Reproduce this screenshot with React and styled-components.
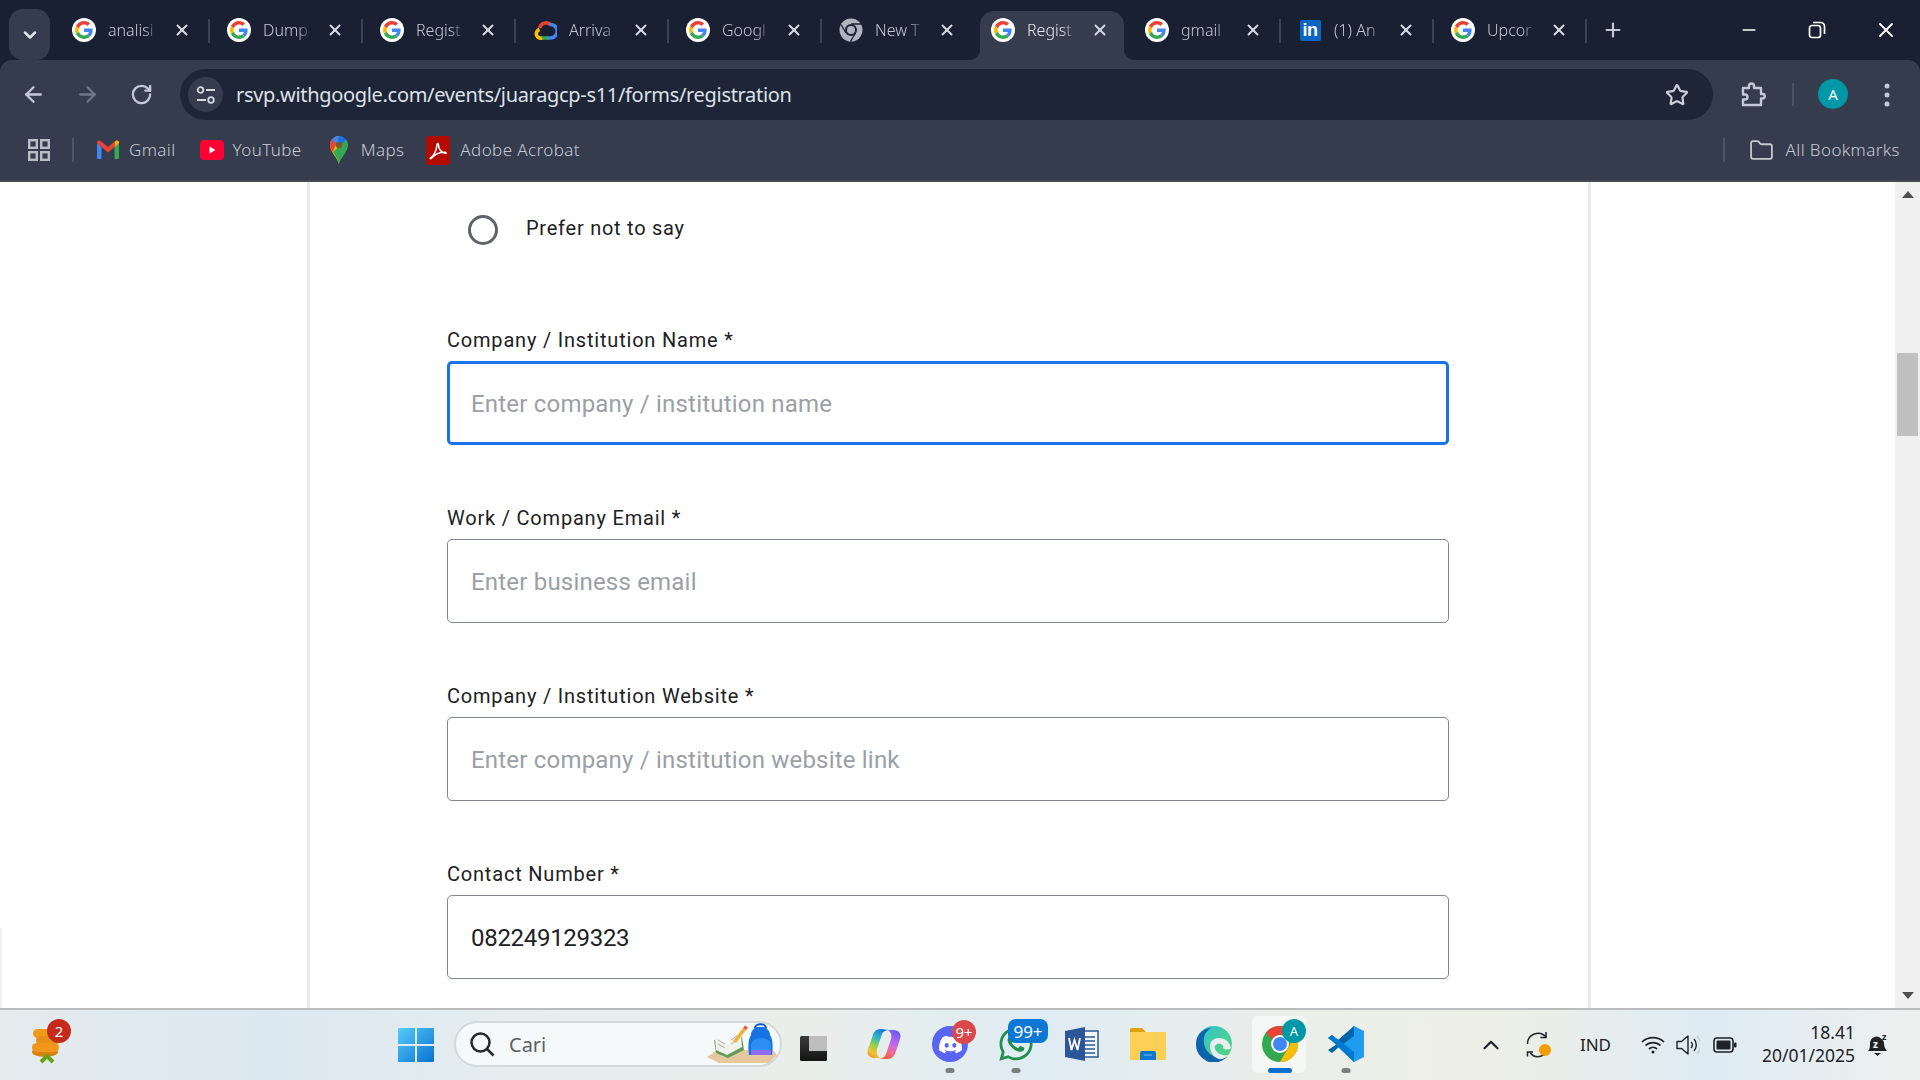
import React from "react";
import styled, { createGlobalStyle } from "styled-components";
import { ArrowLeft, ArrowRight, RotateCw, Star, Folder, X, Plus, ChevronDown, ChevronUp, Minus } from "lucide-react";
import { FaDiscord, FaWhatsapp } from "react-icons/fa";

const Global = createGlobalStyle`
  html, body { margin: 0; padding: 0; height: 100%; overflow: hidden; background: #fff; }
  * { box-sizing: border-box; }
`;

const uiFont = `"Noto Sans", "Open Sans", sans-serif`;
const formFont = `Roboto, "Liberation Sans", sans-serif`;

const Screen = styled.div`
  width: 1920px;
  height: 1080px;
  display: flex;
  flex-direction: column;
  overflow: hidden;
  font-family: ${uiFont};
`;

const TabStrip = styled.div`
  height: 60px;
  flex: none;
  display: flex;
  align-items: flex-end;
  background: #182032;
  padding-left: 9px;
`;

const TabSearch = styled.div`
  width: 41px;
  height: 51px;
  margin: 0 7px 0 0;
  align-self: flex-start;
  margin-top: 9px;
  border-radius: 14px;
  background: #343c4d;
  color: #dfe3ea;
  display: flex;
  align-items: center;
  justify-content: center;
`;

const Tab = styled.div`
  position: relative;
  width: 153px;
  height: 49px;
  flex: none;
  padding: 0 19px 11px 17px;
  display: flex;
  align-items: center;
  color: ${(p) => (p.$active ? "#e3e6ec" : "#c3c8d2")};
  &:nth-child(2) { padding-left: 15px; }
  ${(p) =>
    p.$active &&
    `
    background: #343c4d;
    width: 144px;
    margin: 0 4px 0 5px;
    padding: 0 15px 11px 11px;
    border-radius: 14px 14px 0 0;
    &::before, &::after {
      content: "";
      position: absolute;
      bottom: 0;
      width: 12px;
      height: 12px;
    }
    &::before { left: -12px; background: radial-gradient(circle at 0 0, #182032 12px, #343c4d 12.5px); }
    &::after { right: -12px; background: radial-gradient(circle at 100% 0, #182032 12px, #343c4d 12.5px); }
  `}
`;

const TabSep = styled.span`
  position: absolute;
  right: 0;
  top: 8px;
  width: 2px;
  height: 24px;
  background: #3a4254;
`;

const Favicon = styled.span`
  width: 24px;
  height: 24px;
  flex: none;
  display: flex;
  align-items: center;
  justify-content: center;
`;

const TabTitle = styled.span`
  flex: 1;
  min-width: 0;
  margin-left: 12px;
  font-size: 16px;
  font-weight: 300;
  white-space: nowrap;
  overflow: hidden;
  -webkit-mask-image: linear-gradient(90deg, #000 70%, transparent 100%);
  mask-image: linear-gradient(90deg, #000 70%, transparent 100%);
`;

const TabClose = styled.span`
  margin-left: 14px;
  flex: none;
  display: flex;
  color: #d5d9e1;
`;

const NewTab = styled.div`
  margin: 0 0 19px 15px;
  color: #c3c8d4;
  display: flex;
`;

const WindowControls = styled.div`
  margin-left: auto;
  align-self: stretch;
  display: flex;
`;

const WindowButton = styled.div`
  width: 68.5px;
  display: flex;
  align-items: center;
  justify-content: center;
  color: #fff;
`;

const Chrome = styled.div`
  height: 122px;
  flex: none;
  background: #182032;
`;

const ChromeInner = styled.div`
  height: 122px;
  background: #343c4d;
  border-radius: 12px 12px 0 0;
  border-bottom: 2px solid #45494f;
  display: flex;
  flex-direction: column;
`;

const Toolbar = styled.div`
  height: 60px;
  padding: 9px 0 0 6px;
  display: flex;
`;

const NavButton = styled.div`
  width: ${(p) => p.$w || 54}px;
  height: 51px;
  flex: none;
  display: flex;
  align-items: center;
  justify-content: center;
  color: ${(p) => (p.$dim ? "#6f7686" : "#c3c9d6")};
`;

const DotsSlot = styled(NavButton)`
  padding-left: 6px;
`;

const Omnibox = styled.div`
  width: 1533px;
  height: 51px;
  flex: none;
  margin-left: 12px;
  border-radius: 26px;
  background: #1d2537;
  display: flex;
  align-items: center;
  padding: 0 0 0 8px;
`;

const SiteChip = styled.div`
  width: 35px;
  height: 35px;
  border-radius: 50%;
  background: #343c4d;
  color: #d5d9e2;
  flex: none;
  display: flex;
  align-items: center;
  justify-content: center;
`;

const Url = styled.div`
  margin-left: 13px;
  flex: 1;
  color: #dde1e8;
  font-size: 20px;
  letter-spacing: -0.32px;
`;

const StarSlot = styled.div`
  margin-right: 24px;
  display: flex;
  color: #c9ced9;
`;

const ToolSep = styled.span`
  width: 2px;
  height: 23px;
  margin: 14px 0 0 -1px;
  background: #4a5264;
  flex: none;
`;

const Avatar = styled.div`
  width: 30px;
  height: 30px;
  margin: 10px 0 0 24px;
  border-radius: 50%;
  background: #0097a7;
  color: #fff;
  font-size: 15px;
  flex: none;
  display: flex;
  align-items: center;
  justify-content: center;
`;

const Bookmarks = styled.div`
  height: 60px;
  display: flex;
  align-items: center;
  padding: 0 20px 0 28px;
  color: #c6cad3;
`;

const BarSep = styled.span`
  width: 2px;
  height: 24px;
  background: #4d5465;
  flex: none;
  margin: ${(p) => p.$margin};
`;

const Bookmark = styled.div`
  display: flex;
  align-items: center;
  gap: ${(p) => p.$gap || 9}px;
  margin-right: ${(p) => p.$right || 0}px;
  font-size: 17px;
  letter-spacing: 0.4px;
  font-weight: 300;
  white-space: nowrap;
`;

const BookmarkText = styled.span`
  margin-top: -2px;
`;

const Page = styled.div`
  height: 826px;
  flex: none;
  display: flex;
  background: linear-gradient(90deg, #ececec, #fff) no-repeat left bottom / 3px 80px, #fff;
`;

const PageMain = styled.div`
  width: 1895px;
  flex: none;
  padding-left: 307px;
`;

const FormColumn = styled.div`
  width: 1284px;
  height: 100%;
  padding-left: 137px;
  border-left: 3px solid #e8e9ed;
  border-right: 3px solid #e8e9ed;
  font-family: ${formFont};
  overflow: hidden;
`;

const RadioRow = styled.div`
  display: flex;
  align-items: flex-start;
  padding: 33px 0 0 21px;
  height: 146px;
`;

const RadioCircle = styled.span`
  width: 30px;
  height: 30px;
  border: 3px solid #5f6368;
  border-radius: 50%;
  flex: none;
`;

const RadioLabel = styled.span`
  margin: -1px 0 0 28px;
  font-size: 20px;
  line-height: 28px;
  letter-spacing: 0.75px;
  color: #202124;
`;

const Field = styled.div`
  width: 1002px;
  height: 178px;
`;

const Label = styled.div`
  font-size: 20px;
  line-height: 25px;
  height: 33px;
  letter-spacing: 0.8px;
  white-space: nowrap;
  color: #202124;
`;

const Input = styled.div`
  height: 84px;
  border: ${(p) => (p.$focus ? "3px solid #1a73e8" : "1px solid #80868b")};
  border-radius: 5px;
  padding: 2px 0 0 ${(p) => (p.$focus ? 21 : 23)}px;
  display: flex;
  align-items: center;
  font-size: 24px;
  letter-spacing: ${(p) => (p.$value ? "-0.3px" : "0.2px")};
  color: ${(p) => (p.$value ? "#202124" : "#9aa0a6")};
`;

const Scrollbar = styled.div`
  width: 25px;
  flex: none;
  background: #f0f0f0;
  display: flex;
  flex-direction: column;
  align-items: center;
`;

const ScrollArrow = styled.div`
  height: 25px;
  flex: none;
  display: flex;
  align-items: center;
  justify-content: center;
`;

const ScrollThumb = styled.div`
  width: 21px;
  height: 83px;
  margin: 146px 0 547px;
  flex: none;
  background: #c0c0c0;
`;

const Taskbar = styled.div`
  height: 72px;
  flex: none;
  border-top: 2px solid #b9bdbd;
  background: linear-gradient(90deg, #e4ebed 0%, #dce8f1 14%, #e7eeee 30%, #e9eeea 42%, #dfecf3 54%, #ebeee9 68%, #edefe6 78%, #deebf4 89%, #eef0ee 100%);
  display: flex;
  align-items: flex-start;
  position: relative;
`;

const WidgetSlot = styled.div`
  position: relative;
  width: 378px;
  padding: 16px 0 0 32px;
  flex: none;
  height: 100%;
`;

const Badge = styled.span`
  position: absolute;
  top: ${(p) => p.$top}px;
  left: ${(p) => p.$left}px;
  min-width: ${(p) => p.$w}px;
  height: ${(p) => p.$h}px;
  padding: 0 3px;
  border-radius: ${(p) => p.$r}px;
  background: ${(p) => p.$bg};
  color: #fff;
  font-size: ${(p) => p.$size}px;
  display: flex;
  align-items: center;
  justify-content: center;
  white-space: nowrap;
`;

const StartSlot = styled.div`
  width: 76px;
  height: 100%;
  flex: none;
  display: flex;
  align-items: center;
  justify-content: center;
`;

const SearchPill = styled.div`
  position: relative;
  width: 328px;
  height: 46px;
  margin-top: 11px;
  flex: none;
  border-radius: 24px;
  border: 2px solid #d3d9db;
  background: #f6f9fa;
  display: flex;
  align-items: center;
  padding-left: 13px;
  color: #5b5f62;
  font-size: 20px;
`;

const SearchText = styled.span`
  margin-left: 14px;
`;

const SearchArt = styled.span`
  position: absolute;
  right: 3px;
  top: -2px;
  display: flex;
`;

const AppRow = styled.div`
  display: flex;
  height: 100%;
  margin-left: 3px;
`;

const AppSlot = styled.div`
  position: relative;
  width: 66px;
  height: 100%;
  flex: none;
  display: flex;
  align-items: flex-start;
  justify-content: center;
  padding-top: 16px;
  ${(p) =>
    p.$active &&
    `
    &::before {
      content: "";
      position: absolute;
      top: 6px;
      left: 5px;
      width: 51px;
      height: 57px;
      border-radius: 5px;
      background: rgba(255, 255, 255, 0.55);
      box-shadow: 3px 0 0 rgba(255, 255, 255, 0.5);
    }
  `}
`;

const AppIcon = styled.span`
  position: relative;
  width: 36px;
  height: 36px;
  display: flex;
  align-items: center;
  justify-content: center;
`;

const RunDot = styled.span`
  position: absolute;
  bottom: 7px;
  left: 50%;
  transform: translateX(-50%);
  width: ${(p) => (p.$active ? 24 : 9)}px;
  height: 5px;
  border-radius: 3px;
  background: ${(p) => (p.$active ? "#0a6fc9" : "#7c7f80")};
`;

const Tray = styled.div`
  margin-left: auto;
  height: 100%;
  display: flex;
  align-items: center;
  color: #1f2226;
  padding-right: 31px;
`;

const TrayItem = styled.span`
  display: flex;
  align-items: center;
  justify-content: center;
  margin: ${(p) => p.$margin || 0};
  font-size: ${(p) => p.$size || 17}px;
`;

const Clock = styled.div`
  width: 94px;
  margin: 0 0 3px 24px;
  text-align: right;
  font-size: 17.5px;
  line-height: 23px;
  white-space: nowrap;
`;

function GoogleG({ size = 18 }) {
  return (
    <svg width={size} height={size} viewBox="0 0 48 48">
      <path fill="#EA4335" d="M24 9.5c3.54 0 6.71 1.22 9.21 3.6l6.85-6.85C35.9 2.38 30.47 0 24 0 14.62 0 6.51 5.38 2.56 13.22l7.98 6.19C12.43 13.72 17.74 9.5 24 9.5z" />
      <path fill="#4285F4" d="M46.98 24.55c0-1.57-.15-3.09-.38-4.55H24v9.02h12.94c-.58 2.96-2.26 5.48-4.78 7.18l7.73 6c4.51-4.18 7.09-10.36 7.09-17.65z" />
      <path fill="#FBBC05" d="M10.53 28.59c-.48-1.45-.76-2.99-.76-4.59s.27-3.14.76-4.59l-7.98-6.19C.92 16.46 0 20.12 0 24c0 3.88.92 7.54 2.56 10.78l7.97-6.19z" />
      <path fill="#34A853" d="M24 48c6.48 0 11.93-2.13 15.89-5.81l-7.73-6c-2.15 1.45-4.92 2.3-8.16 2.3-6.26 0-11.57-4.22-13.47-9.91l-7.98 6.19C6.51 42.62 14.62 48 24 48z" />
    </svg>
  );
}

const GoogleCircle = styled.span`
  width: 24px;
  height: 24px;
  border-radius: 50%;
  background: #fff;
  display: flex;
  align-items: center;
  justify-content: center;
`;

function GoogleFavicon() {
  return (
    <GoogleCircle>
      <GoogleG />
    </GoogleCircle>
  );
}

function CloudIcon() {
  return (
    <svg width="24" height="20" viewBox="0 0 24 20" fill="none" strokeWidth="3.6">
      <path d="M6.500 8A6.800 6.800 0 0 1 18 5" stroke="#ea4335" />
      <path d="M17 4.500a6.700 6.700 0 0 1 1 13.500h-4" stroke="#4285f4" />
      <path d="M15 18H8" stroke="#34a853" />
      <path d="M9 18a4.300 4.300 0 0 1-2.500-8.500" stroke="#fbbc05" />
    </svg>
  );
}

function ChromeGray() {
  return (
    <svg width="24" height="24" viewBox="0 0 24 24">
      <circle cx="12" cy="12" r="11.5" fill="#aeb4c0" />
      <circle cx="12" cy="12" r="6" fill="#182032" />
      <circle cx="12" cy="12" r="4" fill="#aeb4c0" />
      <path d="M12 6h10M7 15L2 6.500M16.500 15l-5 8.500" stroke="#182032" strokeWidth="1.300" />
    </svg>
  );
}

const LinkedInBox = styled.span`
  width: 21px;
  height: 21px;
  border-radius: 2px;
  background: #0a66c2;
  color: #fff;
  font-family: "Liberation Sans", sans-serif;
  font-weight: 700;
  font-size: 18px;
  letter-spacing: -0.5px;
  display: flex;
  align-items: center;
  justify-content: center;
`;

function GmailIcon() {
  return (
    <svg width="22" height="20" viewBox="0 0 22 20">
      <path d="M0 3v15a1 1 0 0 0 1 1h3.500V7z" fill="#4285f4" />
      <path d="M22 3v15a1 1 0 0 1-1 1h-3.500V7z" fill="#34a853" />
      <path d="M0 3c0-2.400 2.400-3 4-1.800L11 7l7-5.800C19.600 0 22 .6 22 3l-4.500 4L11 12.500 4.500 7z" fill="#ea4335" />
      <path d="M22 3c0-2.400-2.400-3-4-1.800V7z" fill="#fbbc05" />
    </svg>
  );
}

function YouTubeIcon() {
  return (
    <svg width="24" height="20" viewBox="0 0 24 20">
      <rect width="24" height="20" rx="4" fill="#ff0033" />
      <path d="M9.500 6.500v7l6-3.500z" fill="#fff" />
    </svg>
  );
}

function MapsIcon() {
  return (
    <svg width="18" height="28" viewBox="0 0 18 28">
      <path d="M9 28C7 21 0 16 0 9a9 9 0 0 1 9-9z" fill="#fbbc04" />
      <path d="M9 28c2-7 9-12 9-19 0-2-.7-4-2-5.500L3 16c2 3.500 5 7 6 12z" fill="#34a853" />
      <path d="M2 3.500A9 9 0 0 1 9 0v6L5 10z" fill="#4285f4" />
      <path d="M9 0a9 9 0 0 1 7 3.500L12 8 8 5z" fill="#1a73e8" />
      <path d="M0 9c0-2 .7-4 2-5.500L6 8l-3 8C1.500 14 0 11.500 0 9z" fill="#ea4335" />
      <circle cx="9" cy="9" r="3.200" fill="#7a5a20" />
    </svg>
  );
}

function AcrobatIcon() {
  return (
    <svg width="24" height="29" viewBox="0 0 24 29">
      <rect width="24" height="29" rx="3" fill="#b30b00" />
      <path d="M4.500 22c3-1.500 6-7 6.500-13 .2-2 1.500-2 1.500 0 0 4 3 8 7 8.500 1 .2 1-1.200-1-1.200-4 0-9 1.500-12.500 5.500-1 1.200-2.500 1-1.500.2z" fill="none" stroke="#fff" strokeWidth="1.500" />
    </svg>
  );
}

function AppsGrid() {
  return (
    <svg width="22" height="22" viewBox="0 0 22 22" fill="none" stroke="#b9bdc6" strokeWidth="2.400">
      <rect x="1.200" y="1.200" width="7.600" height="7.600" />
      <rect x="13.200" y="1.200" width="7.600" height="7.600" />
      <rect x="1.200" y="13.200" width="7.600" height="7.600" />
      <rect x="13.200" y="13.200" width="7.600" height="7.600" />
    </svg>
  );
}

function TuneIcon() {
  return (
    <svg width="20" height="20" viewBox="0 0 20 20" fill="none" stroke="currentColor" strokeWidth="1.800">
      <circle cx="4.500" cy="5" r="2.800" />
      <path d="M10 5h9M1 15h9" />
      <circle cx="15" cy="15" r="2.800" />
    </svg>
  );
}

function PuzzleIcon() {
  return (
    <svg width="26" height="26" viewBox="0 0 26 26" fill="none" stroke="#c3c9d6" strokeWidth="2.400" strokeLinejoin="round">
      <path d="M3 6h6V4a2.500 2.500 0 0 1 5 0v2h7v6h1.500a2 2 0 0 1 0 4.500H21V23H3v-5.500h2a2.500 2.500 0 0 0 0-5H3z" />
    </svg>
  );
}

function RestoreIcon() {
  return (
    <svg width="18" height="18" viewBox="0 0 18 18" fill="none" stroke="#fff" strokeWidth="1.700">
      <rect x="1.500" y="4.500" width="11" height="12" rx="2.500" />
      <path d="M5 1.500h7.500a4 4 0 0 1 4 4V13" />
    </svg>
  );
}

function DotsIcon() {
  return (
    <svg width="6" height="26" viewBox="0 0 6 26" fill="#c3c9d6">
      <circle cx="3" cy="4" r="2.500" />
      <circle cx="3" cy="13" r="2.500" />
      <circle cx="3" cy="22" r="2.500" />
    </svg>
  );
}

function CoinsIcon() {
  return (
    <svg width="36" height="48" viewBox="0 0 36 48">
      <ellipse cx="13" cy="26" rx="13" ry="5" fill="#d9800e" />
      <rect x="1" y="3" width="24" height="9" rx="4.500" fill="#f09a1a" />
      <rect x="4" y="10" width="24" height="8" rx="4" fill="#e8901a" />
      <rect x="0" y="17" width="27" height="9" rx="4.500" fill="#f0961c" />
      <path d="M9 36l6-6 6 6" fill="none" stroke="#6aa114" strokeWidth="4" />
    </svg>
  );
}

function StartIcon() {
  return (
    <svg width="36" height="36" viewBox="0 0 36 36">
      <defs>
        <linearGradient id="win" x1="0" y1="0" x2="1" y2="1">
          <stop offset="0" stopColor="#55cdfa" />
          <stop offset="1" stopColor="#0a70d0" />
        </linearGradient>
      </defs>
      <path d="M1 1h16v16H0V2a1 1 0 0 1 1-1zM19 1h16a1 1 0 0 1 1 1v15H19zM0 19h17v16H1a1 1 0 0 1-1-1zM19 19h17v15a1 1 0 0 1-1 1H19z" fill="url(#win)" />
    </svg>
  );
}

function SearchIcon() {
  return (
    <svg width="26" height="26" viewBox="0 0 26 26" fill="none" stroke="#26292c" strokeWidth="2.500">
      <circle cx="11.500" cy="11.500" r="9" />
      <path d="M18 18l6.500 6.500" />
    </svg>
  );
}

function SearchArtwork() {
  return (
    <svg width="70" height="46" viewBox="0 0 70 46">
      <path d="M10 29h56l4 5-8 8H12L0 36z" fill="#e6c8a0" />
      <path d="M7 19l13 7 15-10 2 13-16 8L9 32z" fill="#5f9c5a" />
      <path d="M8 17l12 7 14-10 1 12-15 8L9 29z" fill="#f1f2ea" />
      <path d="M11 19l7 4M11 23l7 4M24 19l6-4M24 23l6-4" stroke="#a9aca4" strokeWidth="1" />
      <path d="M26 20l10-13 3 2-10 13z" fill="#f2b13a" />
      <path d="M36 7l2-2.500 3 2-2 2.500z" fill="#e8573f" />
      <path d="M42 34c-1-8-1-16 2-20 0-4 3-7 6-8h7c3 1 6 4 6 8 3 4 3 12 2 20z" fill="#1573e6" />
      <path d="M48 7a5 3.500 0 0 1 11 0" fill="none" stroke="#0d56ba" strokeWidth="2" />
      <path d="M44 24a10 7 0 0 1 20 0v10H44z" fill="#2e8df2" />
      <path d="M44 29h20v5H44z" fill="#8d6cf0" />
    </svg>
  );
}

function StackIcon() {
  return (
    <svg width="36" height="36" viewBox="0 0 36 36">
      <defs>
        <linearGradient id="stackDark" x1="0" y1="0" x2="0" y2="1">
          <stop offset="0" stopColor="#3a3a3a" />
          <stop offset="1" stopColor="#141414" />
        </linearGradient>
      </defs>
      <rect x="0" y="10" width="27" height="25" rx="1.500" fill="url(#stackDark)" />
      <rect x="9" y="1" width="27" height="24" rx="1" fill="#ececec" />
      <rect x="9" y="10" width="18" height="15" fill="#bdbdbd" />
    </svg>
  );
}

function CopilotIcon() {
  return (
    <svg width="34" height="32" viewBox="0 0 34 32">
      <defs>
        <linearGradient id="copA" x1="0.700" y1="0" x2="0.300" y2="1">
          <stop offset="0" stopColor="#1473e0" />
          <stop offset="0.35" stopColor="#2fb8c8" />
          <stop offset="0.6" stopColor="#8cd04a" />
          <stop offset="0.85" stopColor="#f2c230" />
          <stop offset="1" stopColor="#f0a030" />
        </linearGradient>
        <linearGradient id="copB" x1="0.700" y1="0" x2="0.300" y2="1">
          <stop offset="0" stopColor="#6a5af0" />
          <stop offset="0.45" stopColor="#c46ae8" />
          <stop offset="0.75" stopColor="#f06a8a" />
          <stop offset="1" stopColor="#f0602a" />
        </linearGradient>
      </defs>
      <path d="M14 1C8 1 6 5 5 10L1 21c-2 6 2 9 7 9h5c-3-2-4-5-3-9l4-12c1-5 4-7 8-7z" fill="url(#copA)" />
      <path d="M20 31c6 0 8-4 9-8l4-12c2-6-2-9-7-9h-5c3 2 4 5 3 9l-4 12c-1 5-4 8-8 8z" fill="url(#copB)" />
    </svg>
  );
}

const DiscordCircle = styled.span`
  width: 36px;
  height: 36px;
  border-radius: 50%;
  background: #5865f2;
  color: #fff;
  display: flex;
  align-items: center;
  justify-content: center;
`;

function WordIcon() {
  return (
    <svg width="34" height="34" viewBox="0 0 34 34">
      <rect x="12" y="4" width="21" height="26" fill="#f4f7fb" stroke="#2b579a" strokeWidth="1.500" />
      <path d="M18 10h12M18 14h12M18 18h12M18 22h12M18 26h12" stroke="#2b579a" strokeWidth="1.500" />
      <path d="M0 4l20-4v34L0 30z" fill="#2b579a" />
      <path d="M4 11l2.500 12L9.500 13l3 10L15 11" fill="none" stroke="#fff" strokeWidth="1.800" />
    </svg>
  );
}

function FolderIcon() {
  return (
    <svg width="36" height="32" viewBox="0 0 36 32">
      <path d="M0 2a2 2 0 0 1 2-2h10l4 4H0z" fill="#e0a408" />
      <path d="M0 4h36v28H0z" fill="#fdcf55" />
      <path d="M10 32v-7a2 2 0 0 1 2-2h12a2 2 0 0 1 2 2v7z" fill="#0a78d4" />
      <path d="M14 27h8" stroke="#fff" strokeWidth="1" opacity="0.5" />
    </svg>
  );
}

function EdgeIcon() {
  return (
    <svg width="36" height="36" viewBox="0 0 36 36">
      <defs>
        <linearGradient id="edgeA" x1="0" y1="0" x2="1" y2="1">
          <stop offset="0" stopColor="#2fc4d8" />
          <stop offset="1" stopColor="#58d66e" />
        </linearGradient>
      </defs>
      <circle cx="18" cy="18" r="18" fill="url(#edgeA)" />
      <path d="M0 18C0 8 8 2 16 2c-6 2-9 8-8 15 1 9 9 15 18 15l5-1A18 18 0 0 1 0 18z" fill="#0f62ac" />
      <path d="M14 20c0-5 4-8 9-8 6 0 9 3 11 7l1 3c-2 2-6 2-8 0 1-3-2-5-6-4-2 1-3 3-2 5 2 5 8 7 13 6l-3 3c-7 4-15-3-15-12z" fill="#e8eeee" />
    </svg>
  );
}

function ChromeColor() {
  return (
    <svg width="36" height="36" viewBox="0 0 36 36">
      <circle cx="18" cy="18" r="18" fill="#34a853" />
      <path d="M18 0a18 18 0 0 1 15.600 9H18a9 9 0 0 0-8 4.500L4 6.500A18 18 0 0 1 18 0z" fill="#ea4335" />
      <path d="M33.600 9A18 18 0 0 1 18 36l7.800-13.500A9 9 0 0 0 25.800 9z" fill="#fbbc04" />
      <circle cx="18" cy="18" r="9" fill="#fff" />
      <circle cx="18" cy="18" r="7" fill="#4285f4" />
    </svg>
  );
}

function VscodeIcon() {
  return (
    <svg width="36" height="36" viewBox="0 0 36 36">
      <path d="M26 0l10 5v26l-10 5-16-15 5-4z" fill="#1f9cf0" />
      <path d="M26 0v10L11 21 4 27l-4-3 9-6-9-6 4-3 6 5z" fill="#0065a9" />
      <path d="M26 26v10L4 15 0 12l4-3 12 9z" fill="#007acc" />
    </svg>
  );
}

function SyncIcon() {
  return (
    <svg width="26" height="26" viewBox="0 0 26 26" fill="none" stroke="#1f2226" strokeWidth="1.500">
      <path d="M1.500 12A10.500 10.500 0 0 1 20 5" />
      <path d="M20 0v5.500h-5.500" />
      <path d="M22 16A10 10 0 0 1 4 20.500" />
      <path d="M1.500 24.500V20H7" />
      <circle cx="19" cy="18" r="6" fill="#f59c00" stroke="none" />
    </svg>
  );
}

function WifiIcon() {
  return (
    <svg width="24" height="18" viewBox="0 0 24 18" fill="none" stroke="#1f2226" strokeWidth="1.700">
      <path d="M1 6a16 16 0 0 1 22 0M4.500 9.500a11 11 0 0 1 15 0M8 13a6 6 0 0 1 8 0" />
      <circle cx="12" cy="16" r="1.500" fill="#1f2226" stroke="none" />
    </svg>
  );
}

function SpeakerIcon() {
  return (
    <svg width="24" height="22" viewBox="0 0 24 22" fill="none" stroke="#1f2226" strokeWidth="1.400">
      <path d="M1 7.500h4.500L12 2v18l-6.500-5.500H1z" strokeLinejoin="round" />
      <path d="M15 8a4 4 0 0 1 0 6M18 5a9 9 0 0 1 0 12" />
      <path d="M21 2a13 13 0 0 1 0 18" stroke="#c6cacb" />
    </svg>
  );
}

function BatteryIcon() {
  return (
    <svg width="24" height="16" viewBox="0 0 24 16">
      <rect x="1" y="1" width="19" height="14" rx="3" fill="none" stroke="#1f2226" strokeWidth="1.600" />
      <rect x="3.500" y="3.500" width="14" height="9" rx="1" fill="#1f2226" />
      <rect x="21" y="5.500" width="2.500" height="5" rx="1" fill="#1f2226" />
    </svg>
  );
}

function BellIcon() {
  return (
    <svg width="22" height="28" viewBox="0 -4 22 28">
      <path d="M1 18c2-2 2-4 2-8a6.500 6.500 0 0 1 11-4.500c2 1 3 3 3 5 0 3 1 5 3 7.500z" fill="#1f2226" />
      <path d="M7 20h7l-3.500 3z" fill="#1f2226" />
      <text x="6" y="15" fontSize="10" fontWeight="700" fill="#fff" fontFamily="Noto Sans, sans-serif">z</text>
      <text x="15" y="7" fontSize="9" fontWeight="700" fill="#1f2226" fontFamily="Noto Sans, sans-serif">z</text>
    </svg>
  );
}

const tabs = [
  { title: "analisi", icon: <GoogleFavicon />, sep: true },
  { title: "Dump", icon: <GoogleFavicon />, sep: true },
  { title: "Regist", icon: <GoogleFavicon />, sep: true },
  { title: "Arriva", icon: <CloudIcon />, sep: true },
  { title: "Googl", icon: <GoogleFavicon />, sep: true },
  { title: "New T", icon: <ChromeGray /> },
  { title: "Regist", icon: <GoogleFavicon />, active: true },
  { title: "gmail", icon: <GoogleFavicon />, sep: true },
  { title: "(1) An", icon: <LinkedInBox>in</LinkedInBox>, sep: true },
  { title: "Upcor", icon: <GoogleFavicon />, sep: true },
];

const fields = [
  { label: "Company / Institution Name *", placeholder: "Enter company / institution name", focus: true },
  { label: "Work / Company Email *", placeholder: "Enter business email" },
  { label: "Company / Institution Website *", placeholder: "Enter company / institution website link" },
  { label: "Contact Number *", value: "082249129323" },
];

export default function App() {
  return (
    <Screen>
      <Global />
      <TabStrip>
        <TabSearch>
          <ChevronDown size={20} strokeWidth={3} />
        </TabSearch>
        {tabs.map((t, i) => (
          <Tab key={i} $active={t.active}>
            <Favicon>{t.icon}</Favicon>
            <TabTitle>{t.title}</TabTitle>
            <TabClose>
              <X size={18} strokeWidth={2.6} />
            </TabClose>
            {t.sep && <TabSep />}
          </Tab>
        ))}
        <NewTab>
          <Plus size={22} strokeWidth={2.4} />
        </NewTab>
        <WindowControls>
          <WindowButton>
            <Minus size={20} strokeWidth={1.8} />
          </WindowButton>
          <WindowButton>
            <RestoreIcon />
          </WindowButton>
          <WindowButton>
            <X size={24} strokeWidth={1.8} />
          </WindowButton>
        </WindowControls>
      </TabStrip>

      <Chrome>
        <ChromeInner>
          <Toolbar>
            <NavButton>
              <ArrowLeft size={25} strokeWidth={2.2} />
            </NavButton>
            <NavButton $dim>
              <ArrowRight size={25} strokeWidth={2.2} />
            </NavButton>
            <NavButton>
              <RotateCw size={23} strokeWidth={2.4} />
            </NavButton>
            <Omnibox>
              <SiteChip>
                <TuneIcon />
              </SiteChip>
              <Url>rsvp.withgoogle.com/events/juaragcp-s11/forms/registration</Url>
              <StarSlot>
                <Star size={24} strokeWidth={2.2} />
              </StarSlot>
            </Omnibox>
            <NavButton $w={80}>
              <PuzzleIcon />
            </NavButton>
            <ToolSep />
            <Avatar>A</Avatar>
            <DotsSlot $w={72}>
              <DotsIcon />
            </DotsSlot>
          </Toolbar>
          <Bookmarks>
            <AppsGrid />
            <BarSep $margin="0 23px 0 22px" />
            <Bookmark $right={24} $gap={10}>
              <GmailIcon />
              <BookmarkText>Gmail</BookmarkText>
            </Bookmark>
            <Bookmark $right={28}>
              <YouTubeIcon />
              <BookmarkText>YouTube</BookmarkText>
            </Bookmark>
            <Bookmark $right={22} $gap={13}>
              <MapsIcon />
              <BookmarkText>Maps</BookmarkText>
            </Bookmark>
            <Bookmark $gap={10}>
              <AcrobatIcon />
              <BookmarkText>Adobe Acrobat</BookmarkText>
            </Bookmark>
            <BarSep $margin="0 24px 0 auto" />
            <Bookmark $gap={12}>
              <Folder size={25} strokeWidth={1.7} />
              <BookmarkText>All Bookmarks</BookmarkText>
            </Bookmark>
          </Bookmarks>
        </ChromeInner>
      </Chrome>

      <Page>
        <PageMain>
          <FormColumn>
            <RadioRow>
              <RadioCircle />
              <RadioLabel>Prefer not to say</RadioLabel>
            </RadioRow>
            {fields.map((f) => (
              <Field key={f.label}>
                <Label>{f.label}</Label>
                <Input $focus={f.focus} $value={f.value}>
                  {f.value || f.placeholder}
                </Input>
              </Field>
            ))}
          </FormColumn>
        </PageMain>
        <Scrollbar>
          <ScrollArrow>
            <svg width="12" height="7" viewBox="0 0 12 7">
              <path d="M6 0l6 7H0z" fill="#505050" />
            </svg>
          </ScrollArrow>
          <ScrollThumb />
          <ScrollArrow>
            <svg width="12" height="7" viewBox="0 0 12 7">
              <path d="M6 7L0 0h12z" fill="#505050" />
            </svg>
          </ScrollArrow>
        </Scrollbar>
      </Page>

      <Taskbar>
        <WidgetSlot>
          <CoinsIcon />
          <Badge $top={9} $left={47} $w={24} $h={24} $r={12} $bg="#c42b1c" $size={15}>
            2
          </Badge>
        </WidgetSlot>
        <StartSlot>
          <StartIcon />
        </StartSlot>
        <SearchPill>
          <SearchIcon />
          <SearchText>Cari</SearchText>
          <SearchArt>
            <SearchArtwork />
          </SearchArt>
        </SearchPill>
        <AppRow>
          <AppSlot>
            <AppIcon>
              <StackIcon />
            </AppIcon>
          </AppSlot>
          <AppSlot>
            <AppIcon>
              <CopilotIcon />
            </AppIcon>
          </AppSlot>
          <AppSlot>
            <AppIcon>
              <DiscordCircle>
                <FaDiscord size={25} />
              </DiscordCircle>
              <Badge $top={-6} $left={20} $w={24} $h={24} $r={12} $bg="#d9484a" $size={15}>
                9+
              </Badge>
            </AppIcon>
            <RunDot />
          </AppSlot>
          <AppSlot>
            <AppIcon>
              <FaWhatsapp size={38} color="#1f8f4e" />
              <Badge $top={-7} $left={10} $w={40} $h={24} $r={8} $bg="#0a78d4" $size={17}>
                99+
              </Badge>
            </AppIcon>
            <RunDot />
          </AppSlot>
          <AppSlot>
            <AppIcon>
              <WordIcon />
            </AppIcon>
          </AppSlot>
          <AppSlot>
            <AppIcon>
              <FolderIcon />
            </AppIcon>
          </AppSlot>
          <AppSlot>
            <AppIcon>
              <EdgeIcon />
            </AppIcon>
          </AppSlot>
          <AppSlot $active>
            <AppIcon>
              <ChromeColor />
              <Badge $top={-7} $left={20} $w={24} $h={24} $r={12} $bg="#0097a7" $size={13}>
                A
              </Badge>
            </AppIcon>
            <RunDot $active />
          </AppSlot>
          <AppSlot>
            <AppIcon>
              <VscodeIcon />
            </AppIcon>
            <RunDot />
          </AppSlot>
        </AppRow>
        <Tray>
          <TrayItem>
            <ChevronUp size={26} strokeWidth={2} />
          </TrayItem>
          <TrayItem $margin="0 0 0 22px">
            <SyncIcon />
          </TrayItem>
          <TrayItem $margin="0 0 2px 28px">IND</TrayItem>
          <TrayItem $margin="0 0 0 30px">
            <WifiIcon />
          </TrayItem>
          <TrayItem $margin="0 0 0 11px">
            <SpeakerIcon />
          </TrayItem>
          <TrayItem $margin="0 0 0 13px">
            <BatteryIcon />
          </TrayItem>
          <Clock>
            18.41
            <br />
            20/01/2025
          </Clock>
          <TrayItem $margin="0 0 4px 12px">
            <BellIcon />
          </TrayItem>
        </Tray>
      </Taskbar>
    </Screen>
  );
}
